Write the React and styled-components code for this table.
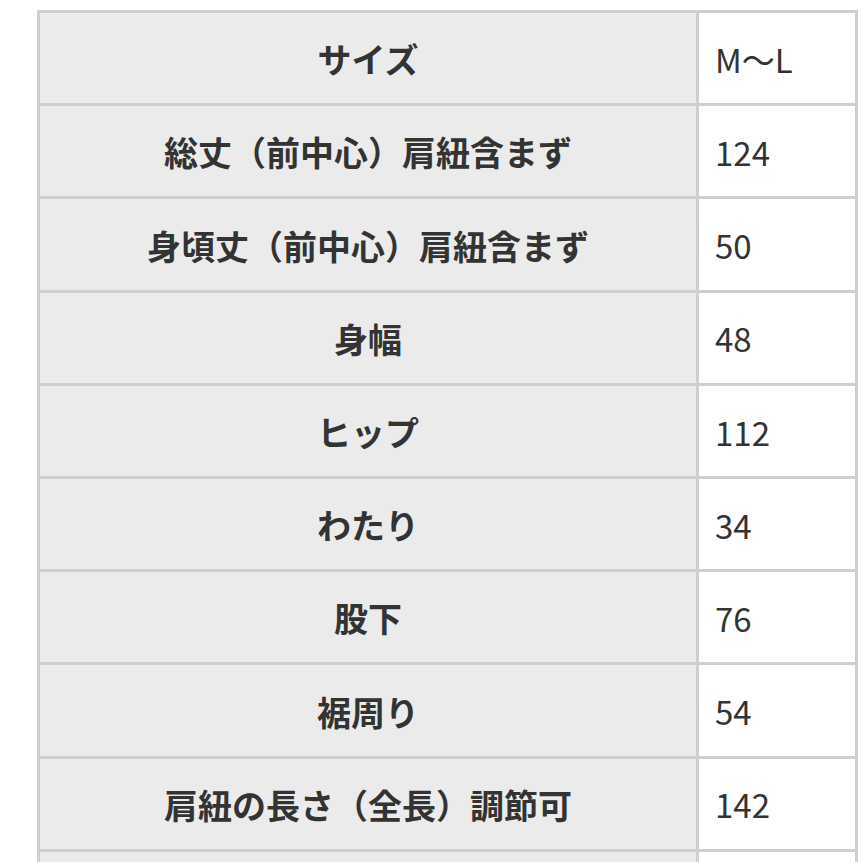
import React from "react";
import styled, { createGlobalStyle } from "styled-components";

const Global = createGlobalStyle`
  html, body { margin: 0; padding: 0; background: #ffffff; }
  body { font-family: "Noto Sans CJK JP", "Noto Sans", sans-serif; overflow: hidden; }
`;

const Page = styled.div`
  width: 862px;
  height: 862px;
  overflow: hidden;
  padding: 10px 0 0 37px;
  box-sizing: border-box;
`;

const Table = styled.table`
  border-collapse: collapse;
  width: 821px;
  table-layout: fixed;
`;

const Row = styled.tr`
  height: 93.2px;
`;

const Label = styled.th`
  width: 656px;
  border: 3px solid #cfcfcf;
  background: #ebebeb;
  color: #333333;
  font-size: 34px;
  font-weight: 700;
  text-align: center;
  vertical-align: middle;
  padding: 3px 0 0 0;
  line-height: 1.2;
`;

const Value = styled.td`
  border: 3px solid #cfcfcf;
  background: #ffffff;
  color: #333333;
  font-size: 33px;
  font-weight: 400;
  text-align: left;
  vertical-align: middle;
  padding: 3px 0 0 16px;
  line-height: 1.2;
`;

const rows = [
  ["サイズ", "M～L"],
  ["総丈（前中心）肩紐含まず", "124"],
  ["身頃丈（前中心）肩紐含まず", "50"],
  ["身幅", "48"],
  ["ヒップ", "112"],
  ["わたり", "34"],
  ["股下", "76"],
  ["裾周り", "54"],
  ["肩紐の長さ（全長）調節可", "142"],
  ["", ""],
];

export default function App() {
  return (
    <Page>
      <Global />
      <Table>
        <tbody>
          {rows.map(([l, v], i) => (
            <Row key={i}>
              <Label>{l}</Label>
              <Value>{v}</Value>
            </Row>
          ))}
        </tbody>
      </Table>
    </Page>
  );
}
